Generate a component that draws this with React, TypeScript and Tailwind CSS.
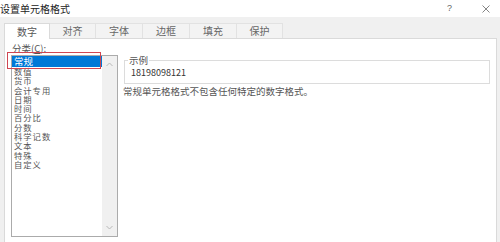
import React from 'react';

// 设置单元格格式 对话框 - 数字 页签
const tabs = [
  { label: '数字', w: 'w-[46px]' },
  { label: '对齐', w: 'w-[46px]' },
  { label: '字体', w: 'w-[47px]' },
  { label: '边框', w: 'w-[47px]' },
  { label: '填充', w: 'w-[47px]' },
  { label: '保护', w: 'w-[46px]' },
];

// 分类列表（常规单独渲染为选中项）
const categories = [
  '数值',
  '货币',
  '会计专用',
  '日期',
  '时间',
  '百分比',
  '分数',
  '科学记数',
  '文本',
  '特殊',
  '自定义',
];

export default function App() {
  return (
    <div className="w-[500px] h-[242px] bg-[#f0f0f0] flex flex-col overflow-hidden font-['Noto_Sans_CJK_SC',sans-serif] text-[#444]">
      {/* 标题栏 */}
      <div className="h-[17px] bg-white flex items-center shrink-0">
        <span className="text-[10px] leading-[10px] text-[#222]">设置单元格格式</span>
        <span className="ml-auto text-[9px] leading-[9px] text-[#666] font-['Liberation_Sans',sans-serif]">?</span>
        <svg className="ml-[30px] mr-[10px]" width="8" height="8" viewBox="0 0 8 8">
          <path d="M0.5 0.5 L7.5 7.5 M7.5 0.5 L0.5 7.5" stroke="#777" strokeWidth="0.9" fill="none" />
        </svg>
      </div>

      {/* 页签 */}
      <div className="flex pl-[4px] mt-[6px] h-[15px] shrink-0 relative z-10">
        {tabs.map((t, i) => (
          <div
            key={t.label}
            className={
              i === 0
                ? `${t.w} h-[16px] bg-white border border-b-0 border-[#dadada] flex items-center justify-center text-[10px] leading-[10px] text-[#555]`
                : `${t.w} h-[15px] border-r border-t border-[#e2e2e2] bg-[#f3f3f3] flex items-center justify-center text-[10px] leading-[10px] text-[#666]`
            }
          >
            {t.label}
          </div>
        ))}
      </div>

      {/* 内容面板 */}
      <div className="ml-[4px] w-[493px] flex-1 bg-white border border-b-0 border-[#dadada] flex">
        {/* 分类 */}
        <div className="w-[113px] shrink-0 pl-[6px] relative">
          <div className="pl-[1px] mt-[4px] text-[9.5px] leading-[10px] text-[#555]">分类(<span className="underline">C</span>):</div>
          <div className="mt-[2px] h-[182px] border border-[#ababab] flex">
            <div className="flex-1 flex flex-col">
              <div className="h-[11px] bg-[#0078d7] text-white text-[9.5px] leading-[11px] pl-[2px]">常规</div>
              {categories.map((c) => (
                <div key={c} className="h-[9.3px] text-[8.3px] leading-[9.3px] tracking-[1px] pl-[2px] text-[#555]">
                  {c}
                </div>
              ))}
            </div>
            <div className="w-[15px] bg-[#f0f0f0] flex flex-col items-center justify-between py-[6px]">
              <svg width="7" height="5" viewBox="0 0 7 5">
                <path d="M0.5 4 L3.5 1 L6.5 4" stroke="#b8b8b8" strokeWidth="1" fill="none" />
              </svg>
              <svg width="7" height="5" viewBox="0 0 7 5">
                <path d="M0.5 1 L3.5 4 L6.5 1" stroke="#b8b8b8" strokeWidth="1" fill="none" />
              </svg>
            </div>
          </div>
          {/* 红色标注框 */}
          <div className="absolute left-[2px] top-[13px] w-[94px] h-[17px] border-[1.5px] border-[#cf4652]" />
        </div>

        {/* 示例 */}
        <div className="flex-1 pl-[6px]">
          <fieldset className="mt-[16px] w-[366px] h-[29px] border border-[#dcdcdc]">
            <legend className="ml-[3px] px-[1px] text-[9.5px] leading-[10px] text-[#555]">示例</legend>
            <div className="pl-[6px] pt-[3px] text-[9px] leading-[10px] text-[#333]">18198098121</div>
          </fieldset>
          <div className="-ml-[1px] mt-[2px] text-[9.5px] leading-[10px] text-[#555]">
            常规单元格格式不包含任何特定的数字格式。
          </div>
        </div>
      </div>
    </div>
  );
}
